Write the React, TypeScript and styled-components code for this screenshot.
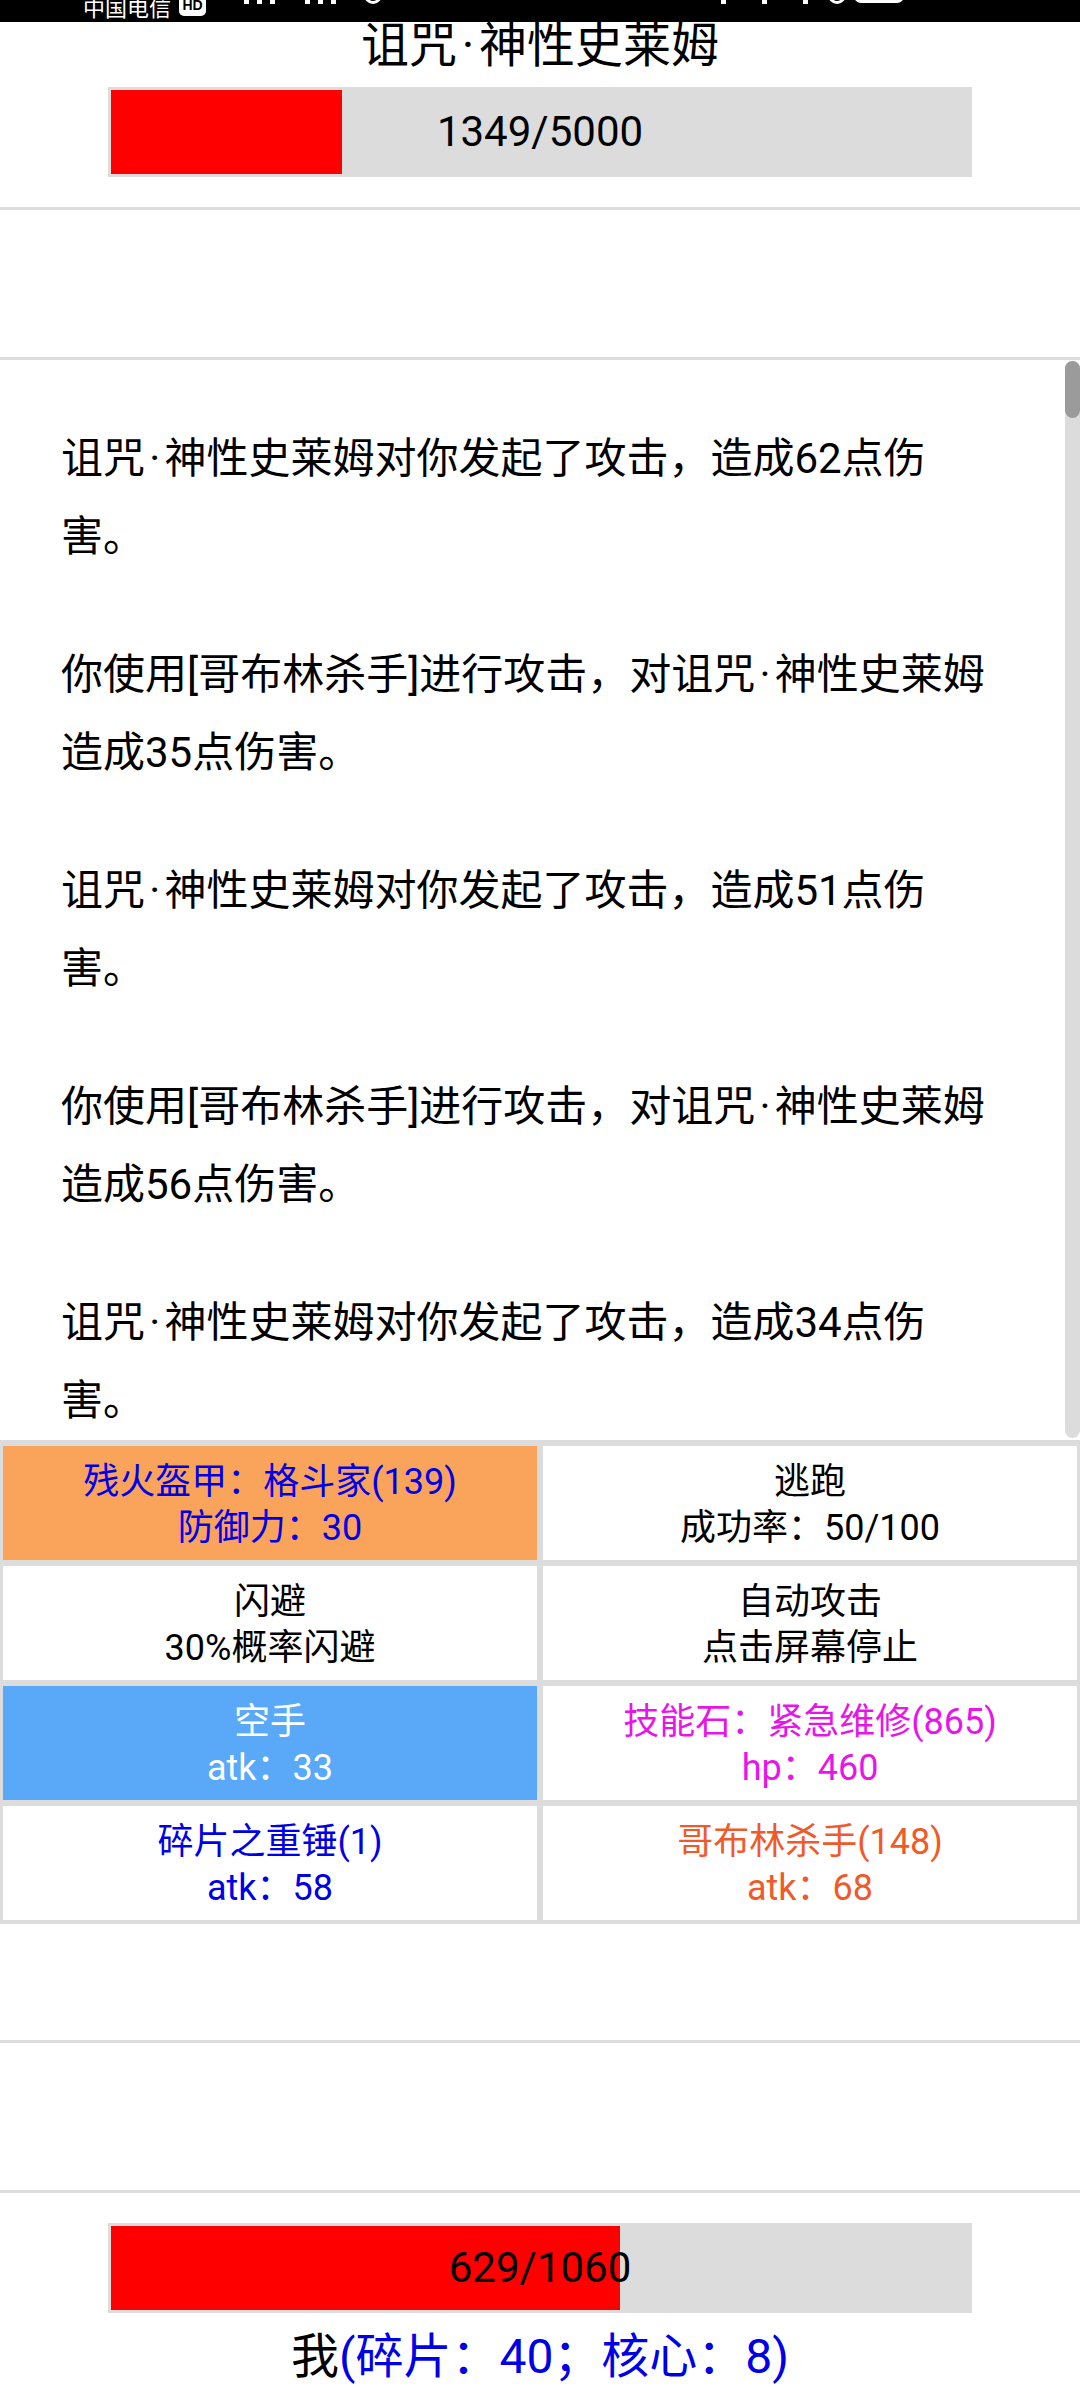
import React from "react";
import styled, { createGlobalStyle } from "styled-components";

const GlobalStyle = createGlobalStyle`
  html, body { margin: 0; padding: 0; background: #fff; }
  body { font-family: Roboto, "Noto Sans CJK SC", sans-serif; color: #000; }
  * { box-sizing: border-box; }
`;

const Page = styled.div`
  width: 1080px;
  height: 2400px;
  display: flex;
  flex-direction: column;
  overflow: hidden;
  background: #fff;
`;

/* ---------- status bar (only its lower edge is visible) ---------- */
const StatusBar = styled.div`
  flex-shrink: 0;
  height: 22px;
  background: #000;
  color: #fff;
  display: flex;
  align-items: flex-end;
  justify-content: space-between;
  padding: 0 83px 9px 83px;
  overflow: hidden;
`;
const StatusGroup = styled.div`
  display: flex;
  align-items: flex-end;
  gap: 8px;
`;
const Carrier = styled.span`
  font-family: "Noto Sans CJK SC", sans-serif;
  font-size: 22px;
  line-height: 22px;
  margin-bottom: -4px;
`;
const HdBadge = styled.span`
  display: inline-flex;
  align-items: center;
  justify-content: center;
  width: 27px;
  height: 22px;
  margin-bottom: -3px;
  border-radius: 5px;
  background: #fff;
  color: #000;
  font-family: "Liberation Sans", sans-serif;
  font-weight: 700;
  font-size: 14px;
`;
const SignalBar = styled.span<{ $h: number }>`
  display: inline-block;
  width: 5px;
  height: ${(p) => p.$h}px;
  background: #fff;
  margin-bottom: 9px;
`;
const Spacer = styled.span<{ $w: number }>`
  display: inline-block;
  width: ${(p) => p.$w}px;
`;
const RingIcon = styled.span`
  display: inline-block;
  width: 18px;
  height: 18px;
  border: 3px solid #fff;
  border-radius: 50%;
  margin-bottom: 9px;
`;
const Battery = styled.span`
  display: inline-block;
  width: 50px;
  height: 24px;
  border-radius: 7px;
  background: #fff;
  margin-bottom: 10px;
`;
const Clock = styled.span`
  font-family: Roboto, sans-serif;
  font-size: 26px;
  line-height: 26px;
  margin-bottom: 9px;
`;

/* ---------- shared text helpers ---------- */
const MidDot = styled.span`
  padding: 0 0.1em;
`;

function WithDot({ text }: { text: string }) {
  const parts = text.split("·");
  return (
    <>
      {parts.map((p, i) => (
        <React.Fragment key={i}>
          {i > 0 && <MidDot>·</MidDot>}
          {p}
        </React.Fragment>
      ))}
    </>
  );
}

/* ---------- enemy header ---------- */
const Header = styled.header`
  display: flex;
  flex-direction: column;
  align-items: center;
  padding-bottom: 30px;
`;
const Title = styled.h1`
  margin: 0;
  font-size: 48px;
  line-height: 48px;
  font-weight: 400;
`;
const HpBar = styled.div<{ $mt: number }>`
  width: 80%;
  height: 90px;
  margin-top: ${(p) => p.$mt}px;
  padding: 3px;
  background: #dcdcdc;
  display: grid;
`;
const HpFill = styled.div`
  grid-area: 1 / 1;
  height: 100%;
  background: #ff0000;
`;
const HpLabel = styled.div`
  grid-area: 1 / 1;
  display: flex;
  align-items: center;
  justify-content: center;
  font-size: 42px;
  line-height: 1;
`;

const Divider = styled.div`
  flex-shrink: 0;
  height: 3px;
  background: #dcdcdc;
`;
const EmptyBlock = styled.div<{ $h: number }>`
  flex-shrink: 0;
  height: ${(p) => p.$h}px;
`;

/* ---------- battle log ---------- */
const LogBox = styled.section`
  position: relative;
  flex-shrink: 0;
  height: 1080px;
  overflow: hidden;
  padding: 60px 0 0 61px;
`;
const LogEntry = styled.p`
  width: 936px;
  margin: 0 0 60px;
  font-size: 42px;
  line-height: 78px;
`;
const ScrollTrack = styled.div`
  position: absolute;
  top: 1px;
  right: 0;
  bottom: 2px;
  width: 15px;
  border-radius: 8px;
  background: #dcdcdc;
`;
const ScrollThumb = styled.div`
  height: 57px;
  border-radius: 8px;
  background: #9b9b9b;
`;

/* ---------- action grid ---------- */
const ActionGrid = styled.div`
  flex-shrink: 0;
  display: grid;
  grid-template-columns: 1fr 1fr;
  grid-auto-rows: 114px;
  gap: 6px;
  padding: 6px 3px 4px;
  background: #dcdcdc;
`;
const ActionCell = styled.div<{ $bg?: string; $fg?: string }>`
  display: flex;
  flex-direction: column;
  align-items: center;
  justify-content: center;
  padding-top: 4px;
  background: ${(p) => p.$bg || "#fff"};
  color: ${(p) => p.$fg || "#000"};
  font-size: 36px;
  line-height: 46px;
  text-align: center;
`;

/* ---------- player footer ---------- */
const Footer = styled.footer`
  display: flex;
  flex-direction: column;
  align-items: center;
`;
const PlayerName = styled.div`
  margin-top: 20px;
  font-size: 48px;
  line-height: 48px;
`;
const Resource = styled.span`
  color: #0000e6;
`;

const BLUE = "#0000e6";

const logs = [
  "诅咒·神性史莱姆对你发起了攻击，造成62点伤害。",
  "你使用[哥布林杀手]进行攻击，对诅咒·神性史莱姆造成35点伤害。",
  "诅咒·神性史莱姆对你发起了攻击，造成51点伤害。",
  "你使用[哥布林杀手]进行攻击，对诅咒·神性史莱姆造成56点伤害。",
  "诅咒·神性史莱姆对你发起了攻击，造成34点伤害。",
  "你使用[哥布林杀手]进行攻击，对诅咒·神性史莱姆造成61点伤害。",
  "诅咒·神性史莱姆对你发起了攻击，造成48点伤害。",
];

const actions: { top: string; bottom: string; bg?: string; fg?: string }[] = [
  { top: "残火盔甲：格斗家(139)", bottom: "防御力：30", bg: "#f9a35b", fg: BLUE },
  { top: "逃跑", bottom: "成功率：50/100" },
  { top: "闪避", bottom: "30%概率闪避" },
  { top: "自动攻击", bottom: "点击屏幕停止" },
  { top: "空手", bottom: "atk：33", bg: "#5aa8f8", fg: "#ffffff" },
  { top: "技能石：紧急维修(865)", bottom: "hp：460", fg: "#e815e8" },
  { top: "碎片之重锤(1)", bottom: "atk：58", fg: BLUE },
  { top: "哥布林杀手(148)", bottom: "atk：68", fg: "#f05a2a" },
];

function Bar({ cur, max, mt }: { cur: number; max: number; mt: number }) {
  return (
    <HpBar $mt={mt}>
      <HpFill style={{ width: `${(cur / max) * 100}%` }} />
      <HpLabel>
        {cur}/{max}
      </HpLabel>
    </HpBar>
  );
}

export default function App() {
  return (
    <>
      <GlobalStyle />
      <Page>
        <StatusBar>
          <StatusGroup>
            <Carrier>中国电信</Carrier>
            <HdBadge>HD</HdBadge>
            <Spacer $w={22} />
            <SignalBar $h={6} />
            <SignalBar $h={10} />
            <SignalBar $h={14} />
            <Spacer $w={14} />
            <SignalBar $h={6} />
            <SignalBar $h={10} />
            <SignalBar $h={14} />
            <Spacer $w={12} />
            <RingIcon />
          </StatusGroup>
          <StatusGroup>
            <SignalBar $h={12} />
            <Spacer $w={20} />
            <SignalBar $h={12} />
            <Spacer $w={20} />
            <SignalBar $h={12} />
            <Spacer $w={4} />
            <RingIcon />
            <Battery />
            <Spacer $w={12} />
            <Clock>12:42</Clock>
          </StatusGroup>
        </StatusBar>

        <Header>
          <Title>
            <WithDot text="诅咒·神性史莱姆" />
          </Title>
          <Bar cur={1349} max={5000} mt={17} />
        </Header>
        <Divider />
        <EmptyBlock $h={147} />
        <Divider />

        <LogBox>
          {logs.map((l, i) => (
            <LogEntry key={i}>
              <WithDot text={l} />
            </LogEntry>
          ))}
          <ScrollTrack>
            <ScrollThumb />
          </ScrollTrack>
        </LogBox>

        <ActionGrid>
          {actions.map((a, i) => (
            <ActionCell key={i} $bg={a.bg} $fg={a.fg}>
              <span>{a.top}</span>
              <span>{a.bottom}</span>
            </ActionCell>
          ))}
        </ActionGrid>

        <EmptyBlock $h={116} />
        <Divider />
        <EmptyBlock $h={147} />
        <Divider />

        <Footer>
          <Bar cur={629} max={1060} mt={30} />
          <PlayerName>
            我<Resource>(碎片：40；核心：8)</Resource>
          </PlayerName>
        </Footer>
      </Page>
    </>
  );
}
